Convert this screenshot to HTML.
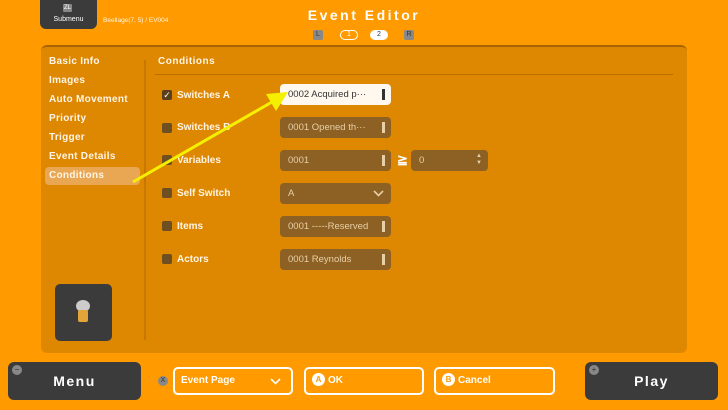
<!DOCTYPE html>
<html><head><meta charset="utf-8"><style>
*{box-sizing:border-box;margin:0;padding:0}
body{width:728px;height:410px;background:#ff9a00;font-family:"Liberation Sans",sans-serif;position:relative;overflow:hidden;color:#fff}
.a{position:absolute}
.panel{left:41px;top:45px;width:646px;height:308px;background:#de8700;border-radius:6px;border-top:2px solid #a86400}
.mi{position:absolute;left:49px;font-size:10px;font-weight:bold;color:#fff5e6;letter-spacing:.3px}
.cb{position:absolute;left:162px;width:10px;height:10px;background:#6e4f22;border-radius:2px}
.lb{position:absolute;left:177px;font-size:10px;font-weight:bold;color:#fff5e6}
.f{position:absolute;left:280px;width:111px;height:21px;background:#8c6123;border-radius:4px;font-size:9.5px;color:#e8cfa8;padding:5px 8px;line-height:11px}
.f .bar{position:absolute;right:6px;top:5px;width:3px;height:11px;background:#e8cfa8}
.btn{position:absolute;top:362px;height:38px;background:#3b3b3b;border-radius:6px;font-size:14px;font-weight:bold;text-align:center;line-height:38px;letter-spacing:1.5px}
.ob{position:absolute;top:367px;height:28px;border:2px solid #fff;border-radius:5px;font-size:10px;font-weight:bold;line-height:24px;padding-left:6px}
.circ{display:inline-block;width:13px;height:13px;border-radius:50%;background:#fff;color:#ff9a00;font-size:8px;text-align:center;line-height:13px;margin-right:3px;vertical-align:middle;position:relative;top:-1px}
</style></head><body>
<div class="a" style="left:40px;top:0;width:57px;height:29px;background:#3b3b3b;border-radius:0 0 6px 6px"></div>
<div class="a" style="left:63px;top:4px;width:9px;height:8px;background:#888;border-radius:1px;font-size:6px;text-align:center;line-height:8px">ZL</div>
<div class="a" style="left:40px;top:16px;width:57px;text-align:center;font-size:7px">Submenu</div>
<div class="a" style="left:103px;top:17px;font-size:6.5px;color:#fff3df">Beellage(7, 5) / EV004</div>
<div class="a" style="left:296px;top:7px;width:136px;text-align:center;font-size:14px;font-weight:bold;letter-spacing:2.5px">Event Editor</div>
<div class="a" style="left:313px;top:30px;width:10px;height:10px;background:#888;border-radius:2px;font-size:7px;color:#333;text-align:center;line-height:10px">L</div>
<div class="a" style="left:340px;top:30px;width:18px;height:10px;border:1.5px solid #fff;border-radius:6px;font-size:7px;text-align:center;line-height:7px">1</div>
<div class="a" style="left:370px;top:30px;width:18px;height:10px;background:#fff;border-radius:6px;font-size:7px;color:#333;text-align:center;line-height:10px">2</div>
<div class="a" style="left:404px;top:30px;width:10px;height:10px;background:#888;border-radius:2px;font-size:7px;color:#333;text-align:center;line-height:10px">R</div>
<div class="a panel"></div>
<div class="a" style="left:45px;top:167px;width:95px;height:18px;background:#e9a653;border-radius:4px"></div>
<div class="mi" style="top:56px">Basic Info</div>
<div class="mi" style="top:75px">Images</div>
<div class="mi" style="top:94px">Auto Movement</div>
<div class="mi" style="top:113px">Priority</div>
<div class="mi" style="top:132px">Trigger</div>
<div class="mi" style="top:151px">Event Details</div>
<div class="mi" style="top:170px">Conditions</div>
<div class="a" style="left:144px;top:60px;width:2px;height:280px;background:#c67800"></div>
<div class="a" style="left:55px;top:284px;width:57px;height:57px;background:#3b3b3b;border-radius:5px"></div>
<div class="a" style="left:76px;top:300px;width:14px;height:12px;background:#ccc;border-radius:50%"></div>
<div class="a" style="left:78px;top:310px;width:10px;height:12px;background:#e3a53a;border-radius:2px"></div>
<div class="a" style="left:158px;top:56px;font-size:10px;font-weight:bold;letter-spacing:.5px;color:#fff5e6">Conditions</div>
<div class="a" style="left:155px;top:74px;width:518px;height:1px;background:#b86f00"></div>
<div class="cb" style="top:90px;background:#5a3f1a;color:#fff;font-size:9px;line-height:10px;text-align:center">✓</div><div class="lb" style="top:90px">Switches A</div>
<div class="cb" style="top:123px"></div><div class="lb" style="top:122px">Switches B</div>
<div class="cb" style="top:155px"></div><div class="lb" style="top:155px">Variables</div>
<div class="cb" style="top:188px"></div><div class="lb" style="top:188px">Self Switch</div>
<div class="cb" style="top:221px"></div><div class="lb" style="top:221px">Items</div>
<div class="cb" style="top:254px"></div><div class="lb" style="top:254px">Actors</div>
<div class="f" style="top:84px;background:#fff8ee;color:#333">0002 Acquired p···<div class="bar" style="background:#333"></div></div>
<div class="f" style="top:117px">0001 Opened th···<div class="bar"></div></div>
<div class="f" style="top:150px">0001<div class="bar"></div></div>
<div class="a" style="left:397px;top:152px;font-size:13px;font-weight:bold">≧</div>
<div class="f" style="top:150px;left:411px;width:77px">0<div style="position:absolute;right:6px;top:3px;font-size:6px;line-height:7px">▲<br>▼</div></div>
<div class="f" style="top:183px">A<svg style="position:absolute;right:7px;top:7px" width="11" height="7"><polyline points="1,1 5.5,5.5 10,1" fill="none" stroke="#e8cfa8" stroke-width="1.6"/></svg></div>
<div class="f" style="top:216px">0001 -----Reserved<div class="bar"></div></div>
<div class="f" style="top:249px">0001 Reynolds<div class="bar"></div></div>
<svg class="a" style="left:0;top:0" width="728" height="410"><line x1="133" y1="182" x2="272" y2="102" stroke="#f5f000" stroke-width="3"/><polygon points="288,92 266,94 276,111" fill="#f5f000"/></svg>
<div class="btn" style="left:8px;width:133px">Menu</div>
<div class="a" style="left:12px;top:365px;width:10px;height:10px;border-radius:50%;background:#888;font-size:8px;text-align:center;line-height:9px;color:#333">−</div>
<div class="btn" style="left:585px;width:133px">Play</div>
<div class="a" style="left:589px;top:365px;width:10px;height:10px;border-radius:50%;background:#888;font-size:8px;text-align:center;line-height:9px;color:#333">+</div>
<div class="a" style="left:158px;top:376px;width:10px;height:10px;border-radius:50%;background:#888;font-size:7px;text-align:center;line-height:10px;color:#333">X</div>
<div class="ob" style="left:173px;width:120px">Event Page<svg style="position:absolute;right:10px;top:9px" width="11" height="7"><polyline points="1,1 5.5,5.5 10,1" fill="none" stroke="#fff" stroke-width="1.6"/></svg></div>
<div class="ob" style="left:304px;width:120px"><span class="circ">A</span>OK</div>
<div class="ob" style="left:434px;width:121px"><span class="circ">B</span>Cancel</div>
</body></html>
